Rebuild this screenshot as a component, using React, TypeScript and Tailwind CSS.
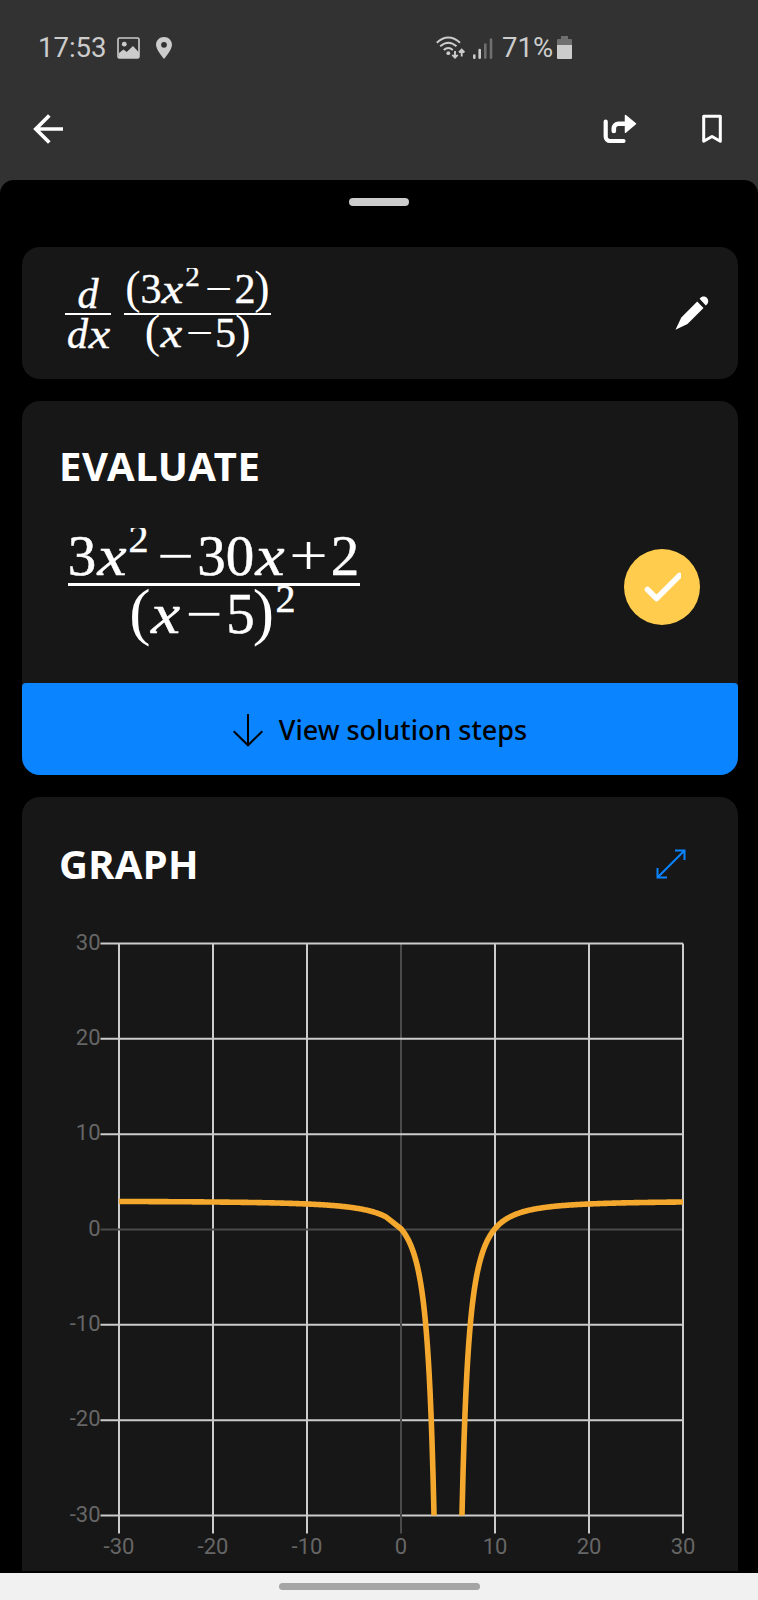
import React, { ReactNode } from 'react';

const GRID_LEFT = 97;
const GRID_TOP = 45.5;
const STEP_X = 94;
const STEP_Y = 95.33;
const TICKS = [-30, -20, -10, 0, 10, 20, 30];

const toX = (x: number) => GRID_LEFT + ((x + 30) / 10) * STEP_X;
const toY = (y: number) => GRID_TOP + ((30 - y) / 10) * STEP_Y;
const derivative = (x: number) => (3 * x * x - 30 * x + 2) / ((x - 5) * (x - 5));

function curve(from: number, to: number) {
  const points: string[] = [];
  for (let x = from; x <= to + 0.001; x += 0.1) {
    // coarse sample just before the y axis
    if (x > -1.55 && x < -0.05) continue;
    points.push(`${toX(x).toFixed(2)},${toY(derivative(x)).toFixed(2)}`);
  }
  return points.join(' ');
}

interface GlyphProps {
  className: string;
  children: ReactNode;
}

function Glyph({ className, children }: GlyphProps) {
  return <span className={`flex shrink-0 justify-center whitespace-nowrap ${className}`}>{children}</span>;
}

function StatusBar() {
  return (
    <div className="flex h-[96px] items-center pl-[38px] text-[27.5px] leading-none text-[#cccccc]">
      <span className="w-[79px]">17:53</span>
      <svg className="h-[22px] w-[23px] shrink-0" viewBox="0 0 23 22" fill="none">
        <rect x="1" y="1" width="21" height="20" rx="1.5" stroke="#ccc" strokeWidth="1.6" />
        <circle cx="7.3" cy="7.2" r="2.4" fill="#ccc" />
        <path d="M2 16l4.5-3.5 3.2 2.5 6.3-6 6 6.500V21H2z" fill="#ccc" />
      </svg>
      <svg className="ml-4 h-[22px] w-[16px] shrink-0" viewBox="0 0 16 22">
        <path
          d="M8 0C3.500 0 0 3.400 0 7.800 0 13 8 22 8 22s8-9 8-14.200C16 3.400 12.500 0 8 0zm0 10.700A2.900 2.900 0 1 1 8 4.900a2.900 2.900 0 0 1 0 5.800z"
          fill="#ccc"
        />
      </svg>
      <svg className="ml-[264px] h-6 w-[30px] shrink-0" viewBox="0 0 30 24" fill="none" stroke="#ccc" strokeWidth="2">
        <path d="M.8 6.700Q12.300-3.600 24 6.700M4.200 10.300Q12.300 3.200 20.500 10.300M7.800 14Q12.300 10 16.800 14" />
        <circle cx="12.300" cy="17.200" r="1.900" fill="#ccc" stroke="none" />
        <path d="M19 15v6.500M16.300 18.800l2.700 2.800 2.700-2.800M25.700 20.500V14M23 16.500l2.700-2.800 2.700 2.800" strokeWidth="1.900" />
      </svg>
      <svg className="ml-[7px] h-6 w-[20px] shrink-0" viewBox="0 0 20 24" fill="none" strokeWidth="2.600" strokeLinecap="round">
        <path d="M1.300 19.500V21.700M6.700 14V21.700" stroke="#ccc" />
        <path d="M12.300 8.500V21.700M18 3.500V21.700" stroke="#6f6f6f" />
      </svg>
      <span className="ml-[9px] w-[55px] whitespace-nowrap">71%</span>
      <svg className="h-6 w-[15px] shrink-0" viewBox="0 0 15 24">
        <path d="M4 0h7v3h3a1 1 0 0 1 1 1v6H0V4a1 1 0 0 1 1-1h3z" fill="#6f6f6f" />
        <path d="M0 9h15v13a1 1 0 0 1-1 1H1a1 1 0 0 1-1-1z" fill="#ccc" />
      </svg>
    </div>
  );
}

function Toolbar() {
  return (
    <div className="flex h-[65px] items-center pr-[36px] pl-[33px]">
      <svg className="h-[30px] w-[31px]" viewBox="0 0 31 30" fill="none" stroke="#fff" strokeWidth="3.700">
        <path d="M16.300 1.500L2.800 15l13.500 13.500M2.800 15H30" />
      </svg>
      <svg className="ml-auto h-[30px] w-[34px]" viewBox="0 0 34 30" fill="none" stroke="#fff">
        <path d="M2.700 7.500V22.700a4.300 4.300 0 0 0 4.300 4.300H20.500" strokeWidth="4.200" strokeLinecap="round" />
        <path d="M10.800 17V14.500a4.800 4.800 0 0 1 4.800-4.800H23" strokeWidth="4.600" strokeLinecap="round" />
        <path d="M22.500 1.500L32.500 9.800 22.500 18.300z" fill="#fff" strokeWidth="1.500" strokeLinejoin="round" />
      </svg>
      <svg className="ml-[65px] h-[30px] w-[20px]" viewBox="0 0 20 30" fill="none" stroke="#fff" strokeWidth="3">
        <path d="M1.700 2.300H18.300V27.300L10 22.500 1.700 27.300z" strokeLinejoin="round" />
      </svg>
    </div>
  );
}

function ProblemCard() {
  return (
    <section className="flex h-[132px] shrink-0 items-center rounded-[18px] bg-[#171717] pr-[29px] pl-[43px]">
      <div className="flex h-[94px] items-start gap-[13px] font-['Liberation_Serif',serif] text-[42px] leading-[42px] text-white [-webkit-text-stroke:0.4px_white]">
        <div className="w-[46px]">
          <div className="flex h-[47px] items-end justify-center italic">
            <Glyph className="relative top-[2px] w-[21px]">d</Glyph>
          </div>
          <div className="h-[2px] bg-white" />
          <div className="relative -top-[2px] flex justify-center italic">
            <Glyph className="w-[23px]">d</Glyph>
            <Glyph className="w-[21px] scale-x-115">x</Glyph>
          </div>
        </div>
        <div className="w-[147px]">
          <div className="relative top-px flex h-[47px] items-baseline pl-1">
            <Glyph className="w-[10px] text-[46px] font-light [-webkit-text-stroke:0]">(</Glyph>
            <Glyph className="ml-1 w-[18px]">3</Glyph>
            <Glyph className="ml-0.5 w-[21px] scale-x-115 italic">x</Glyph>
            <Glyph className="relative -top-[17px] ml-[3px] w-[13px] text-[29px] [clip-path:inset(13px_-4px_0_-4px)]">2</Glyph>
            <Glyph className="ml-[7px] w-[25px] scale-x-115 [-webkit-text-stroke:0]">−</Glyph>
            <Glyph className="ml-[5px] w-[18px]">2</Glyph>
            <Glyph className="ml-0.5 w-[12px] text-[46px] [-webkit-text-stroke:0]">)</Glyph>
          </div>
          <div className="h-[2px] bg-white" />
          <div className="relative -top-[4px] flex items-baseline pl-[23px]">
            <Glyph className="w-[11px] text-[46px] [-webkit-text-stroke:0]">(</Glyph>
            <Glyph className="ml-[3px] w-[21px] scale-x-115 italic">x</Glyph>
            <Glyph className="ml-[5px] w-[25px] scale-x-115 [-webkit-text-stroke:0]">−</Glyph>
            <Glyph className="ml-[5px] w-[17px]">5</Glyph>
            <Glyph className="ml-[3px] w-[12px] text-[46px] [-webkit-text-stroke:0]">)</Glyph>
          </div>
        </div>
      </div>
      <svg className="ml-auto h-[34px] w-[34px]" viewBox="0 0 34 34" fill="#fff">
        <path d="M22.200 5.500L28.500 12 12.500 28 .5 33.700 6.300 21.500z" />
        <path d="M24.600 2.700C27-.4 30.500.2 32 1.900c2 2.200 1.600 5.500-1.200 7.700z" />
      </svg>
    </section>
  );
}

function EvaluateCard() {
  return (
    <section className="mt-[22px] flex h-[374px] shrink-0 flex-col overflow-hidden rounded-[18px] bg-[#171717]">
      <h2 className="mt-[38px] ml-[37px] font-['Noto_Sans',sans-serif] text-[40px] leading-[54px] font-bold tracking-[0.6px] text-white">EVALUATE</h2>
      <div className="mt-[34px] flex h-[128px] justify-between pr-[38px] pl-[46px]">
        <div className="h-[122px] w-[292px] font-['Liberation_Serif',serif] text-[57px] leading-[57px] text-white [-webkit-text-stroke:0.5px_white]">
          <div className="flex h-[56px] items-baseline pl-0.5">
            <Glyph className="w-[24px]">3</Glyph>
            <Glyph className="ml-1 w-[28px] scale-x-115 italic">x</Glyph>
            <Glyph className="relative -top-[23px] ml-1 w-[17px] text-[40px] [clip-path:inset(18px_-4px_0_-4px)]">2</Glyph>
            <Glyph className="ml-[11px] w-[35px] scale-x-115 [-webkit-text-stroke:0]">−</Glyph>
            <Glyph className="ml-[6px] w-[25px]">3</Glyph>
            <Glyph className="ml-1 w-[24px]">0</Glyph>
            <Glyph className="ml-1 w-[28px] scale-x-115 italic">x</Glyph>
            <Glyph className="ml-[6px] w-[37px] scale-x-120 [-webkit-text-stroke:0]">+</Glyph>
            <Glyph className="ml-[6px] w-[24px]">2</Glyph>
          </div>
          <div className="h-[3px] bg-white" />
          <div className="relative -top-[3px] flex items-baseline pl-[65px]">
            <Glyph className="w-[14px] text-[64px] [-webkit-text-stroke:0]">(</Glyph>
            <Glyph className="ml-[4px] w-[29px] scale-x-115 italic">x</Glyph>
            <Glyph className="ml-[7px] w-[34px] scale-x-115 [-webkit-text-stroke:0]">−</Glyph>
            <Glyph className="ml-2 w-[23px]">5</Glyph>
            <Glyph className="ml-[5px] w-[13px] text-[64px] [-webkit-text-stroke:0]">)</Glyph>
            <Glyph className="relative -top-[21px] ml-[7px] w-[17px] text-[40px]">2</Glyph>
          </div>
        </div>
        <div className="mt-[22px] flex size-[76px] items-center justify-center rounded-full bg-[#ffcc4d]">
          <svg className="h-[30px] w-[38px]" viewBox="0 0 38 30" fill="none" stroke="#fff" strokeWidth="5.600" strokeLinecap="round" strokeLinejoin="round">
            <path d="M4.500 17.500l9 9L36.500 3.500" />
          </svg>
        </div>
      </div>
      <button className="mt-auto flex h-[92px] w-full items-center justify-center gap-4 rounded-t-[4px] bg-[#0a84ff] pt-[3px] font-['Noto_Sans',sans-serif] text-[27px] font-medium text-black">
        <svg className="h-[33px] w-[30px]" viewBox="0 0 30 33" fill="none" stroke="#000" strokeWidth="2">
          <path d="M15 0v31M.7 17.300L15 31.300l14.300-14" />
        </svg>
        View solution steps
      </button>
    </section>
  );
}

function GraphCard() {
  return (
    <section className="mt-[22px] flex h-[774px] shrink-0 flex-col rounded-t-[18px] bg-[#171717]">
      <div className="flex h-[101px] items-center justify-between pt-[33px] pr-[52px] pl-[37px]">
        <h2 className="font-['Noto_Sans',sans-serif] text-[40px] leading-[54px] font-bold tracking-[0.3px] text-white">GRAPH</h2>
        <svg className="h-[30px] w-[30px]" viewBox="0 0 30 30" fill="none" stroke="#0a84ff" strokeWidth="2">
          <path d="M1.500 28.500l27-27M19 1.500h9.500V11M1.500 19v9.500H11" />
        </svg>
      </div>
      <svg className="h-[673px] w-full" viewBox="0 0 716 673" fill="none">
        <defs>
          <clipPath id="plot">
            <rect x={GRID_LEFT} y={GRID_TOP} width={STEP_X * 6} height={STEP_Y * 6} />
          </clipPath>
        </defs>
        {TICKS.map(t => (
          <g key={t} stroke={t === 0 ? '#4b4b4b' : '#cccccc'} strokeWidth="2">
            <path d={`M${toX(t)} ${toY(30)}V${toY(-30) + 18}`} />
            <path d={`M${toX(-30) - 18.500} ${toY(t)}H${toX(30)}`} />
          </g>
        ))}
        <g fill="#666666" className="font-[Roboto,sans-serif] text-[22px]">
          {TICKS.map(t => (
            <g key={t}>
              <text x={toX(t)} y={toY(-30) + 38.500} textAnchor="middle">{t}</text>
              <text x={toX(-30) - 18.500} y={toY(t) + 6.300} textAnchor="end">{t}</text>
            </g>
          ))}
        </g>
        <g clipPath="url(#plot)" stroke="#f4a92e" strokeWidth="5.600" strokeLinejoin="round">
          <polyline points={curve(-30, 4.5)} />
          <polyline points={curve(5.5, 30)} />
        </g>
      </svg>
    </section>
  );
}

export default function App() {
  return (
    <div className="flex h-[1600px] w-[758px] flex-col overflow-hidden bg-[#323232] font-[Roboto,sans-serif]">
      <StatusBar />
      <div className="h-[84px]">
        <Toolbar />
      </div>
      <main className="flex min-h-0 flex-1 flex-col rounded-t-[14px] bg-black pr-5 pl-[22px]">
        <div className="relative right-px mx-auto mt-[18px] mb-[41px] h-[8px] w-[60px] shrink-0 rounded-full bg-[#cccccc]" />
        <ProblemCard />
        <EvaluateCard />
        <GraphCard />
      </main>
      <div className="flex h-[27px] shrink-0 items-start justify-center bg-[#f1f1f1] pt-[10px]">
        <div className="h-[7px] w-[201px] rounded-full bg-[#a5a5a5]" />
      </div>
    </div>
  );
}
